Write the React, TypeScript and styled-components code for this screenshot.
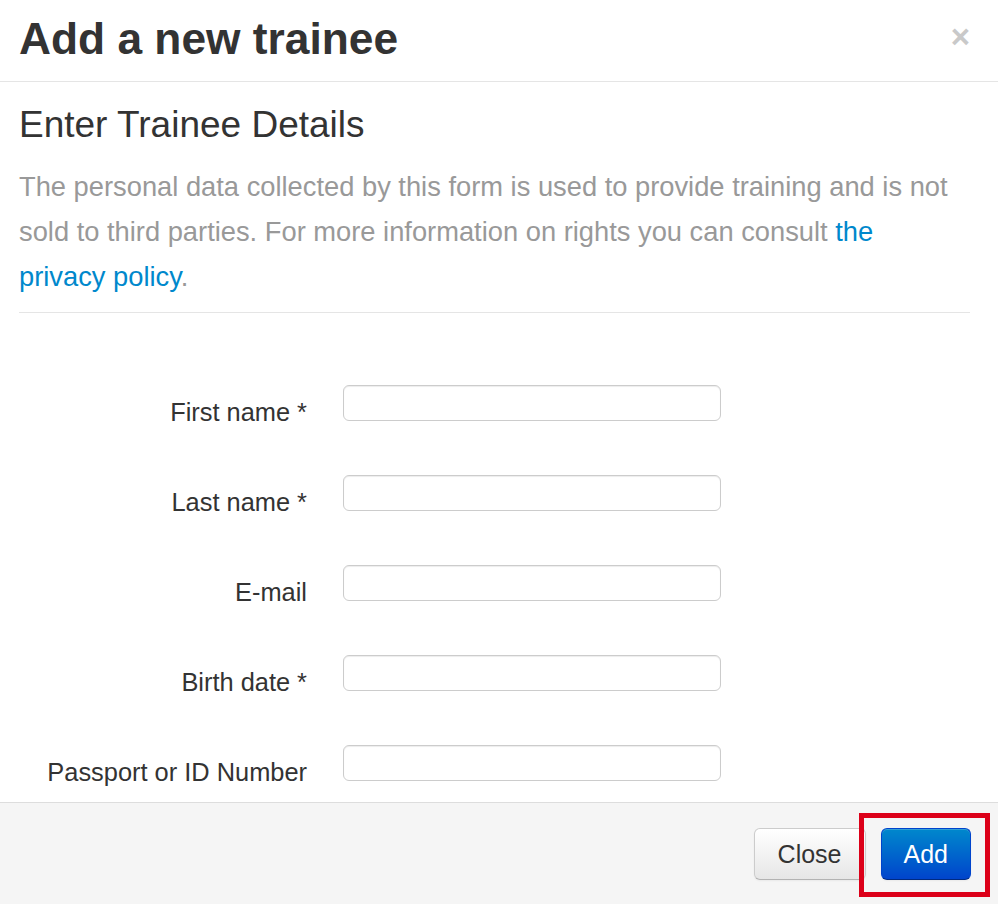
import React from "react";
import styled, { createGlobalStyle } from "styled-components";

const GlobalStyle = createGlobalStyle`
  html, body {
    margin: 0;
    padding: 0;
    background: #ffffff;
  }
  body {
    font-family: "Liberation Sans", Arial, Helvetica, sans-serif;
    color: #333333;
  }
  * { box-sizing: border-box; }
`;

const Modal = styled.div`
  width: 998px;
  height: 904px;
  display: flex;
  flex-direction: column;
  background: #ffffff;
  overflow: hidden;
`;

const Header = styled.header`
  display: flex;
  align-items: center;
  justify-content: space-between;
  height: 82px;
  padding: 0 28px 0 19px;
  border-bottom: 1px solid #e5e5e5;
  flex: none;
`;

const Title = styled.h2`
  margin: 0;
  font-size: 44.3px;
  line-height: 50px;
  font-weight: 700;
  color: #333333;
  padding-bottom: 3px;
`;

const CloseX = styled.button`
  border: 0;
  background: transparent;
  padding: 0;
  font-family: "Liberation Sans", Arial, sans-serif;
  font-size: 33px;
  font-weight: 700;
  line-height: 1;
  color: #c9c9c9;
  cursor: pointer;
  margin-top: -8px;
`;

const Body = styled.div`
  flex: 1;
  overflow: hidden;
  padding: 20px 28px 0 19px;
`;

const Subtitle = styled.h3`
  margin: 0;
  font-size: 37px;
  line-height: 45px;
  font-weight: 400;
  color: #333333;
`;

const Lead = styled.p`
  margin: 17px 0 0;
  max-width: 940px;
  font-size: 27.3px;
  line-height: 45px;
  color: #999999;
`;

const Link = styled.a`
  color: #0088cc;
  text-decoration: none;
`;

const Divider = styled.hr`
  margin: 13px 0 0;
  border: 0;
  border-top: 1px solid #e5e5e5;
`;

const Form = styled.form`
  display: flex;
  flex-direction: column;
  gap: 54px;
  padding-top: 72px;
`;

const Row = styled.div`
  display: grid;
  grid-template-columns: 288px 378px;
  grid-template-rows: 36px;
  column-gap: 36px;
  align-items: start;
`;

const Label = styled.label`
  text-align: right;
  font-size: 25.4px;
  line-height: 36px;
  padding-top: 9px;
  color: #333333;
  white-space: nowrap;
`;

const Input = styled.input`
  height: 36px;
  width: 378px;
  border: 1px solid #cccccc;
  border-radius: 6px;
  box-shadow: inset 0 1px 1px rgba(0, 0, 0, 0.075);
  background: #ffffff;
  font-size: 20px;
  padding: 4px 8px;
  font-family: "Liberation Sans", Arial, sans-serif;
`;

const Footer = styled.footer`
  flex: none;
  height: 102px;
  border-top: 1px solid #dddddd;
  background: #f5f5f5;
  display: flex;
  justify-content: flex-end;
  align-items: flex-start;
  padding: 25px 27px 0 0;
  gap: 15px;
`;

const Button = styled.button<{ $primary?: boolean }>`
  height: 52px;
  padding: 0 ${(p) => (p.$primary ? "22px" : "23px")};
  border-radius: 6px;
  font-family: "Liberation Sans", Arial, sans-serif;
  font-size: 25px;
  line-height: 50px;
  cursor: pointer;
  border: 1px solid ${(p) => (p.$primary ? "#0044cc" : "#cccccc")};
  border-bottom-color: ${(p) => (p.$primary ? "#002a80" : "#b3b3b3")};
  color: ${(p) => (p.$primary ? "#ffffff" : "#333333")};
  background: ${(p) =>
    p.$primary
      ? "linear-gradient(to bottom, #0088cc, #0044cc)"
      : "linear-gradient(to bottom, #ffffff, #e6e6e6)"};
  box-shadow: inset 0 1px 0 rgba(255, 255, 255, 0.2), 0 1px 2px rgba(0, 0, 0, 0.05);
`;

const Highlight = styled.div`
  position: relative;
  display: flex;
`;

const HighlightFrame = styled.span`
  position: absolute;
  top: -15px;
  bottom: -17px;
  left: -22px;
  right: -19px;
  border: 5px solid #dc0019;
  pointer-events: none;
`;

const fields = [
  "First name *",
  "Last name *",
  "E-mail",
  "Birth date *",
  "Passport or ID Number",
];

export default function App() {
  return (
    <>
      <GlobalStyle />
      <Modal>
        <Header>
          <Title>Add a new trainee</Title>
          <CloseX aria-label="Close">×</CloseX>
        </Header>
        <Body>
          <Subtitle>Enter Trainee Details</Subtitle>
          <Lead>
            The personal data collected by this form is used to provide training and is not
            sold to third parties. For more information on rights you can consult{" "}
            <Link href="#">the privacy policy</Link>.
          </Lead>
          <Divider />
          <Form>
            {fields.map((f) => (
              <Row key={f}>
                <Label>{f}</Label>
                <Input type="text" />
              </Row>
            ))}
          </Form>
        </Body>
        <Footer>
          <Button type="button">Close</Button>
          <Highlight>
            <Button type="button" $primary>
              Add
            </Button>
            <HighlightFrame />
          </Highlight>
        </Footer>
      </Modal>
    </>
  );
}
